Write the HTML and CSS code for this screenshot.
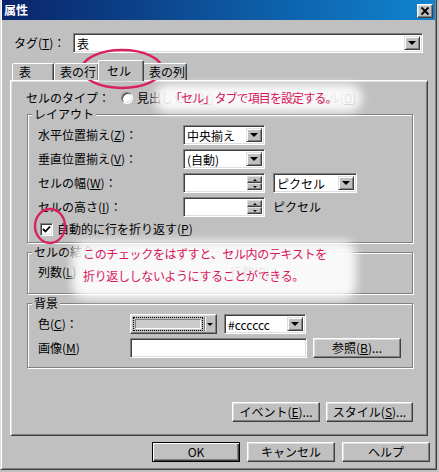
FILE: index.html
```html
<!DOCTYPE html>
<html lang="ja">
<head>
<meta charset="utf-8">
<title>属性</title>
<link rel="stylesheet" href="styles.css">
</head>
<body>
<div class="window">
  <div class="titlebar">
    <span class="title">属性</span>
    <span class="close"><svg width="14" height="12" viewBox="0 0 14 12"><path d="M3.5 2.5 L10.5 9.5 M10.5 2.5 L3.5 9.5" stroke="#000" stroke-width="1.8" fill="none"/></svg></span>
  </div>
  <div class="tag-row">
    <span class="tag-label">タグ(<u>T</u>)：</span>
    <div class="combo wide"><span class="val">表</span><span class="drop"></span></div>
  </div>
  <div class="tabs">
    <div class="tab t1">表</div>
    <div class="tab t2">表の行</div>
    <div class="tab active">セル</div>
    <div class="tab t4">表の列</div>
  </div>
  <div class="panel">
    <div class="type-row">
      <span class="type-label">セルのタイプ：</span>
      <span class="opt opt1"><span class="radio"></span>見出しセル(<u>H</u>)</span>
      <span class="opt"><span class="radio"></span>データセル(<u>D</u>)</span>
    </div>
    <fieldset class="group layout">
      <legend>レイアウト</legend>
      <div class="frow"><span class="flabel">水平位置揃え(<u>Z</u>)：</span><div class="combo w82"><span class="val">中央揃え</span><span class="drop"></span></div></div>
      <div class="frow"><span class="flabel">垂直位置揃え(<u>V</u>)：</span><div class="combo w82"><span class="val">(自動)</span><span class="drop"></span></div></div>
      <div class="frow"><span class="flabel">セルの幅(<u>W</u>)：</span><div class="spin"><span class="val"></span><span class="spin-btns"><span class="up"></span><span class="down"></span></span></div><div class="combo w84 gap8"><span class="val">ピクセル</span><span class="drop"></span></div></div>
      <div class="frow"><span class="flabel">セルの高さ(<u>I</u>)：</span><div class="spin"><span class="val"></span><span class="spin-btns"><span class="up"></span><span class="down"></span></span></div><span class="unit">ピクセル</span></div>
      <div class="crow"><span class="check"><svg width="9" height="9" viewBox="0 0 9 9"><path d="M1 4 L3.5 6.5 L8 1.5" stroke="#000" stroke-width="1.8" fill="none"/></svg></span><span>自動的に行を折り返す(<u>P</u>)</span></div>
    </fieldset>
    <fieldset class="group merge">
      <legend>セルの結合</legend>
      <div class="mrow"><span class="mlabel">列数(<u>L</u>)：</span><span class="faint">行数(<u>R</u>)：</span></div>
    </fieldset>
    <fieldset class="group bg">
      <legend>背景</legend>
      <div class="brow"><span class="blabel">色(<u>C</u>)：</span>
        <div class="colorpick"><span class="cp-main"><span class="swatch"></span></span><span class="cp-drop"></span></div>
        <div class="combo w82 gap7"><span class="val">#cccccc</span><span class="drop"></span></div>
      </div>
      <div class="brow"><span class="blabel">画像(<u>M</u>)</span>
        <div class="textbox w177"></div>
        <div class="btn w88 gap6">参照(<u>B</u>)...</div>
      </div>
    </fieldset>
    <div class="event-row">
      <div class="btn w88">イベント(<u>E</u>)...</div>
      <div class="btn w87">スタイル(<u>S</u>)...</div>
    </div>
  </div>
  <div class="bottom-row">
    <div class="btn default w88">OK</div>
    <div class="btn w88">キャンセル</div>
    <div class="btn w88">ヘルプ</div>
  </div>

  <div class="overlays">
    <div class="glow glow1"></div>
    <div class="note note1">「セル」タブで項目を設定する。</div>
    <div class="glow glow2"></div>
    <div class="note note2"><div>このチェックをはずすと、セル内のテキストを</div><div>折り返ししないようにすることができる。</div></div>
    <svg class="marks" width="439" height="472" viewBox="0 0 439 472">
      <ellipse cx="122" cy="69" rx="40" ry="19" fill="none" stroke="#d6245e" stroke-width="2.4"/>
      <ellipse cx="50" cy="226" rx="15" ry="17" fill="none" stroke="#d6245e" stroke-width="2.4"/>
    </svg>
  </div>
</div>
</body>
</html>
```
FILE: styles.css
```css
* { box-sizing: border-box; }
html, body { margin: 0; padding: 0; }
body {
  background: #c0c0c0;
  width: 439px;
  height: 472px;
  overflow: hidden;
  font-family: "Noto Sans CJK JP", "Liberation Sans", sans-serif;
  font-size: 12px;
  line-height: 14px;
  color: #000;
}
u { text-decoration: underline; text-underline-offset: 1px; }

.window {
  position: relative;
  width: 437px;
  height: 470px;
  border: 1px solid;
  border-top: 0;
  border-color: #dfdfdf #404040 #404040 #dfdfdf;
  box-shadow: inset 1px 0 #fff, inset -1px -1px #808080;
  padding: 0 1px 1px;
  background: #c0c0c0;
}

.titlebar {
  height: 20px;
  display: flex;
  align-items: center;
  justify-content: space-between;
  padding: 0 2px 0 2px;
  background: linear-gradient(to right, #0a246a, #1084d0);
  color: #fff;
  font-weight: bold;
}
.close {
  width: 16px;
  height: 14px;
  margin-top: 2px;
  background: #c0c0c0;
  border: 1px solid;
  border-color: #fff #404040 #404040 #fff;
  box-shadow: inset -1px -1px #808080, inset 1px 1px #dfdfdf;
  display: flex;
  align-items: center;
  justify-content: center;
}
.close svg { display: block; }

.tag-row {
  display: flex;
  align-items: center;
  height: 20px;
  margin-top: 13px;
  padding-left: 12px;
}
.tag-label { width: 59px; }

.combo {
  display: flex;
  height: 20px;
  background: #fff;
  border: 1px solid;
  border-color: #808080 #fff #fff #808080;
  box-shadow: inset 1px 1px #404040, inset -1px -1px #dfdfdf;
  padding: 2px;
}
.combo .val { flex: 1; padding-left: 1px; line-height: 16px; white-space: nowrap; }
.wide { width: 350px; }
.w82 { width: 82px; }
.w84 { width: 84px; }
.w87 { width: 87px; }
.w88 { width: 88px; }
.w177 { width: 177px; }
.gap6 { margin-left: 6px; }
.gap7 { margin-left: 7px; }
.gap8 { margin-left: 8px; }

.drop {
  width: 16px;
  flex: none;
  background: #c0c0c0;
  border: 1px solid;
  border-color: #dfdfdf #404040 #404040 #dfdfdf;
  box-shadow: inset 1px 1px #fff, inset -1px -1px #808080;
  display: flex;
  align-items: center;
  justify-content: center;
}
.drop::after {
  content: "";
  width: 0;
  height: 0;
  border-left: 4px solid transparent;
  border-right: 4px solid transparent;
  border-top: 4px solid #000;
}

.tabs {
  position: relative;
  z-index: 1;
  display: flex;
  align-items: flex-end;
  height: 20px;
  margin-top: 7px;
  padding-left: 10px;
}
.tab {
  height: 17px;
  background: #c0c0c0;
  border: 1px solid;
  border-bottom: 0;
  border-color: #fff #404040 transparent #fff;
  box-shadow: inset -1px 0 #808080;
  border-radius: 2px 2px 0 0;
  padding: 1px 0 0 6px;
  white-space: nowrap;
}
.t1 { width: 42px; }
.t2 { width: 45px; padding-left: 5px; }
.t4 { width: 44px; padding-left: 5px; }
.tab.active {
  width: 46px;
  height: 21px;
  margin: 0 -1px -1px;
  padding: 3px 0 0 8px;
  position: relative;
  z-index: 2;
}

.panel {
  margin-left: 8px;
  width: 418px;
  height: 356px;
  border: 1px solid;
  border-color: #fff #404040 #404040 #fff;
  box-shadow: inset 1px 1px #dfdfdf, inset -1px -1px #808080;
  padding: 10px 14px 13px 16px;
  display: flex;
  flex-direction: column;
}

.type-row { display: flex; align-items: center; height: 14px; margin-left: -1px; }
.type-label { width: 95px; }
.opt { display: flex; align-items: center; }
.opt1 { width: 143px; }
.radio {
  width: 12px;
  height: 12px;
  border-radius: 50%;
  background: #fff;
  border: 1px solid;
  border-color: #808080 #fff #fff #808080;
  box-shadow: inset 1px 1px #404040, inset -1px -1px #dfdfdf;
  margin-right: 4px;
}

.group {
  margin: 2px 0 0;
  border: 1px solid #808080;
  box-shadow: 1px 1px 0 #fff, inset 1px 1px 0 #fff;
  min-width: 0;
  padding: 4px 10px 6px;
}
.group legend {
  padding: 0 2px;
  margin-left: -6px;
  line-height: 14px;
  background: #c0c0c0;
}

.frow { display: flex; align-items: center; height: 20px; }
.frow + .frow { margin-top: 4px; }
.flabel { width: 145px; white-space: nowrap; }
.unit { margin-left: 8px; }

.spin {
  display: flex;
  width: 82px;
  height: 20px;
  background: #fff;
  border: 1px solid;
  border-color: #808080 #fff #fff #808080;
  box-shadow: inset 1px 1px #404040, inset -1px -1px #dfdfdf;
  padding: 2px;
}
.spin .val { flex: 1; }
.spin-btns { width: 15px; display: flex; flex-direction: column; }
.spin-btns span {
  flex: 1;
  background: #c0c0c0;
  border: 1px solid;
  border-color: #dfdfdf #404040 #404040 #dfdfdf;
  box-shadow: inset -1px -1px #808080;
  display: flex;
  align-items: center;
  justify-content: center;
}
.spin-btns .up::after {
  content: "";
  border-left: 2px solid transparent;
  border-right: 2px solid transparent;
  border-bottom: 2px solid #000;
}
.spin-btns .down::after {
  content: "";
  border-left: 2px solid transparent;
  border-right: 2px solid transparent;
  border-top: 2px solid #000;
}

.crow { display: flex; align-items: center; height: 14px; margin-top: 5px; }
.check {
  width: 13px;
  height: 13px;
  margin: 0 4px 0 2px;
  background: #fff;
  border: 1px solid;
  border-color: #808080 #fff #fff #808080;
  box-shadow: inset 1px 1px #404040, inset -1px -1px #dfdfdf;
  display: flex;
  align-items: center;
  justify-content: center;
}
.check svg { display: block; }

.merge { padding-top: 6px; padding-bottom: 14px; }
.mrow { display: flex; height: 14px; align-items: center; }
.mlabel { width: 192px; }
.faint { color: #000; }

.bg { padding-top: 4px; padding-bottom: 9px; }
.brow { display: flex; align-items: center; height: 20px; }
.brow + .brow { margin-top: 4px; }
.blabel { width: 92px; }

.colorpick {
  display: flex;
  width: 87px;
  height: 20px;
  background: #c0c0c0;
  border: 1px solid;
  border-color: #fff #404040 #404040 #fff;
  box-shadow: inset -1px -1px #808080, inset 1px 1px #dfdfdf;
  padding: 2px;
}
.cp-main { flex: 1; border: 1px dotted #000; padding: 1px; display: flex; }
.swatch { flex: 1; background: #cccccc; border: 1px solid; border-color: #808080 #fff #fff #808080; }
.cp-drop {
  width: 10px;
  margin-left: 1px;
  border-left: 1px solid #808080;
  box-shadow: inset 1px 0 #fff;
  display: flex;
  align-items: center;
  justify-content: center;
}
.cp-drop::after {
  content: "";
  border-left: 3px solid transparent;
  border-right: 3px solid transparent;
  border-top: 3px solid #000;
}

.textbox {
  height: 20px;
  background: #fff;
  border: 1px solid;
  border-color: #808080 #fff #fff #808080;
  box-shadow: inset 1px 1px #404040, inset -1px -1px #dfdfdf;
}

.btn {
  height: 20px;
  background: #c0c0c0;
  border: 1px solid;
  border-color: #fff #404040 #404040 #fff;
  box-shadow: inset -1px -1px #808080, inset 1px 1px #dfdfdf;
  display: flex;
  align-items: center;
  justify-content: center;
  white-space: nowrap;
}
.btn.default {
  border-color: #000;
  box-shadow: inset 1px 1px #fff, inset -1px -1px #404040, inset -2px -2px #808080;
}

.event-row {
  margin-top: auto;
  display: flex;
  justify-content: flex-end;
  gap: 6px;
}

.bottom-row {
  margin-top: 6px;
  display: flex;
  justify-content: flex-end;
  gap: 7px;
  padding-right: 5px;
}

.overlays {
  position: absolute;
  left: -1px;
  top: 0;
  width: 439px;
  height: 472px;
  pointer-events: none;
}
.glow {
  position: absolute;
  background: rgba(255, 255, 255, 0.9);
  border-radius: 14px;
  filter: blur(5px);
}
.glow1 { left: 154px; top: 84px; width: 208px; height: 28px; }
.glow2 { left: 72px; top: 241px; width: 284px; height: 58px; }
.note {
  position: absolute;
  color: #d8145a;
  white-space: nowrap;
}
.note1 { left: 170px; top: 91px; letter-spacing: -0.9px; }
.note2 { left: 83px; top: 247px; letter-spacing: -0.35px; }
.note2 div + div { margin-top: 8px; }
.marks { position: absolute; left: 0; top: 0; }
```
